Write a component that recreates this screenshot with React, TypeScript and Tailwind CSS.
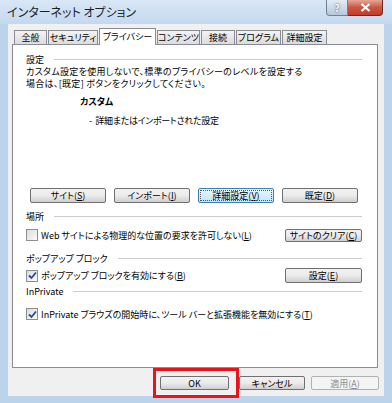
import React from 'react';

const FONT = "font-['Noto_Sans_CJK_JP','Noto_Sans',sans-serif] [font-feature-settings:'palt']";

const Check: React.FC<{ checked?: boolean }> = ({ checked }) => (
  <span className="w-[12px] h-[12px] border border-[#8e8f8f] bg-gradient-to-br from-[#dcdcdc] to-[#fbfbfb] flex items-center justify-center shrink-0">
    {checked && (
      <svg width="9" height="9" viewBox="0 0 9 9">
        <path d="M1 4.5 L3.5 7 L8 1.5" fill="none" stroke="#2a4a9b" strokeWidth="1.8" />
      </svg>
    )}
  </span>
);

const Btn: React.FC<{ label: React.ReactNode; w?: string; focus?: boolean; disabled?: boolean; h?: string }> = ({ label, w = 'w-[76px]', focus, disabled, h = 'h-[15px]' }) => (
  <div
    className={`${w} ${h} rounded-[2px] border flex items-center justify-center text-[9px] leading-none whitespace-nowrap shrink-0 ${
      disabled
        ? 'border-[#adb2b5] bg-[#f4f4f4] text-[#8d8d8d]'
        : focus
        ? 'border-[#3c7fb1] bg-gradient-to-b from-[#eaf6fd] to-[#bee6fd] text-black outline outline-1 outline-dotted outline-[#555] -outline-offset-3'
        : 'border-[#707070] bg-gradient-to-b from-[#f2f2f2] via-[#ebebeb] to-[#cfcfcf] text-black'
    }`}
  >
    {label}
  </div>
);

const Group: React.FC<{ title: string; className?: string }> = ({ title, className = '' }) => (
  <div className={`h-[12px] flex items-center gap-[10px] ${className}`}>
    <span className="text-[9px] leading-none whitespace-nowrap">{title}</span>
    <div className="flex-1 h-px bg-[#c9cdd1]" />
  </div>
);

const u = (c: string) => <span className="underline">{c}</span>;

const tabs = ['全般', 'セキュリティ', 'プライバシー', 'コンテンツ', '接続', 'プログラム', '詳細設定'];
const tabW = [33, 50, 57, 43, 34, 45, 45];

export default function App() {
  return (
    <div className={`w-[392px] h-[403px] bg-[#bcd3ec] flex flex-col text-black ${FONT}`}>
      {/* title bar */}
      <div className="h-[24px] shrink-0 flex items-start bg-gradient-to-b from-[#d9e7f6] to-[#c4d8ee]">
        <span className="ml-[7px] mt-[5px] text-[12px] leading-[14px] text-[#1e1e1e]">インターネット オプション</span>
        <div className="ml-auto mr-[9px] flex">
          <div className="w-[22px] h-[16px] rounded-bl-[4px] border border-t-0 border-[#6f8196] bg-gradient-to-b from-[#e2ebf4] to-[#b8c9dc] flex items-center justify-center text-[10px] text-white font-bold [text-shadow:0_0_2px_#333]">?</div>
          <div className="w-[35px] h-[16px] rounded-br-[4px] border border-l-0 border-t-0 border-[#6b2a24] bg-gradient-to-b from-[#e5a697] via-[#c95642] to-[#c23b26] flex items-center justify-center">
            <svg width="11" height="9" viewBox="0 0 11 9">
              <path d="M1.5 1 L9.5 8 M9.5 1 L1.5 8" stroke="#fff" strokeWidth="2.2" />
            </svg>
          </div>
        </div>
      </div>

      {/* client */}
      <div className="mx-[8px] h-[372px] bg-[#f0f0f0] flex flex-col px-[4px] pt-[4px]">
        {/* tabs */}
        <div className="h-[17px] flex items-end gap-[1px] pl-[2px] relative z-10">
          {tabs.map((t, i) =>
            i === 2 ? (
              <div key={t} style={{ width: tabW[i] }} className="h-[17px] bg-white border border-b-0 border-[#898c95] text-[9px] whitespace-nowrap flex items-center justify-center -mb-px pb-px">
                {t}
              </div>
            ) : (
              <div key={t} style={{ width: tabW[i] }} className="h-[14px] bg-gradient-to-b from-[#f3f3f3] to-[#dcdcdc] border border-b-0 border-[#898c95] text-[9px] whitespace-nowrap flex items-center justify-center">
                {t}
              </div>
            )
          )}
        </div>

        {/* panel */}
        <div className="w-[366px] h-[324px] shrink-0 bg-white border border-[#898c95] flex flex-col pl-[13px] pr-[15px]">
          <Group title="設定" className="mt-[8px]" />
          <div className="mt-[1px] text-[9px] leading-[12px] tracking-[0.3px]">
            <div>カスタム設定を使用しないで、標準のプライバシーのレベルを設定する</div>
            <div>場合は、[既定] ボタンをクリックしてください。</div>
          </div>
          <div className="mt-[6px] ml-[54px] h-[12px] text-[9px] leading-[12px] font-bold">カスタム</div>
          <div className="mt-[7px] ml-[63px] h-[12px] text-[9px] leading-[12px] tracking-[-0.3px] whitespace-pre">-  詳細またはインポートされた設定</div>

          <div className="mt-[61px] ml-[4px] flex gap-[8px]">
            <Btn label={<>サイト({u('S')})</>} />
            <Btn label={<>インポート({u('I')})</>} />
            <Btn label={<>詳細設定({u('V')})</>} focus />
            <Btn label={<>既定({u('D')})</>} />
          </div>

          <Group title="場所" className="mt-[7px]" />
          <div className="mt-[6px] h-[14px] flex items-center">
            <Check />
            <span className="ml-[3px] text-[9px] leading-none whitespace-nowrap">Web サイトによる物理的な位置の要求を許可しない({u('L')})</span>
            <div className="ml-auto">
              <Btn label={<>サイトのクリア({u('C')})</>} w="w-[77px]" h="h-[13px]" />
            </div>
          </div>

          <Group title="ポップアップ ブロック" className="mt-[10px]" />
          <div className="mt-[4px] h-[15px] flex items-center">
            <Check checked />
            <span className="ml-[3px] text-[9px] leading-none whitespace-nowrap">ポップアップ ブロックを有効にする({u('B')})</span>
            <div className="ml-auto">
              <Btn label={<>設定({u('E')})</>} w="w-[77px]" />
            </div>
          </div>

          <Group title="InPrivate" className="mt-[2px]" />
          <div className="mt-[10px] h-[14px] flex items-center">
            <Check checked />
            <span className="ml-[3px] text-[9px] leading-none whitespace-nowrap">InPrivate ブラウズの開始時に、ツール バーと拡張機能を無効にする({u('T')})</span>
          </div>
        </div>

        {/* bottom buttons */}
        <div className="flex items-start pl-[141px]">
          <div className="border-[3px] border-[#e8141b] pl-[4px] pr-[7px] py-[5px]">
            <Btn label="OK" w="w-[69px]" h="h-[14px]" />
          </div>
          <div className="mt-[8px]">
            <Btn label="キャンセル" w="w-[66px]" h="h-[14px]" />
          </div>
          <div className="ml-[6px] mt-[8px]">
            <Btn label={<>適用({u('A')})</>} w="w-[68px]" h="h-[14px]" disabled />
          </div>
        </div>
      </div>
    </div>
  );
}
